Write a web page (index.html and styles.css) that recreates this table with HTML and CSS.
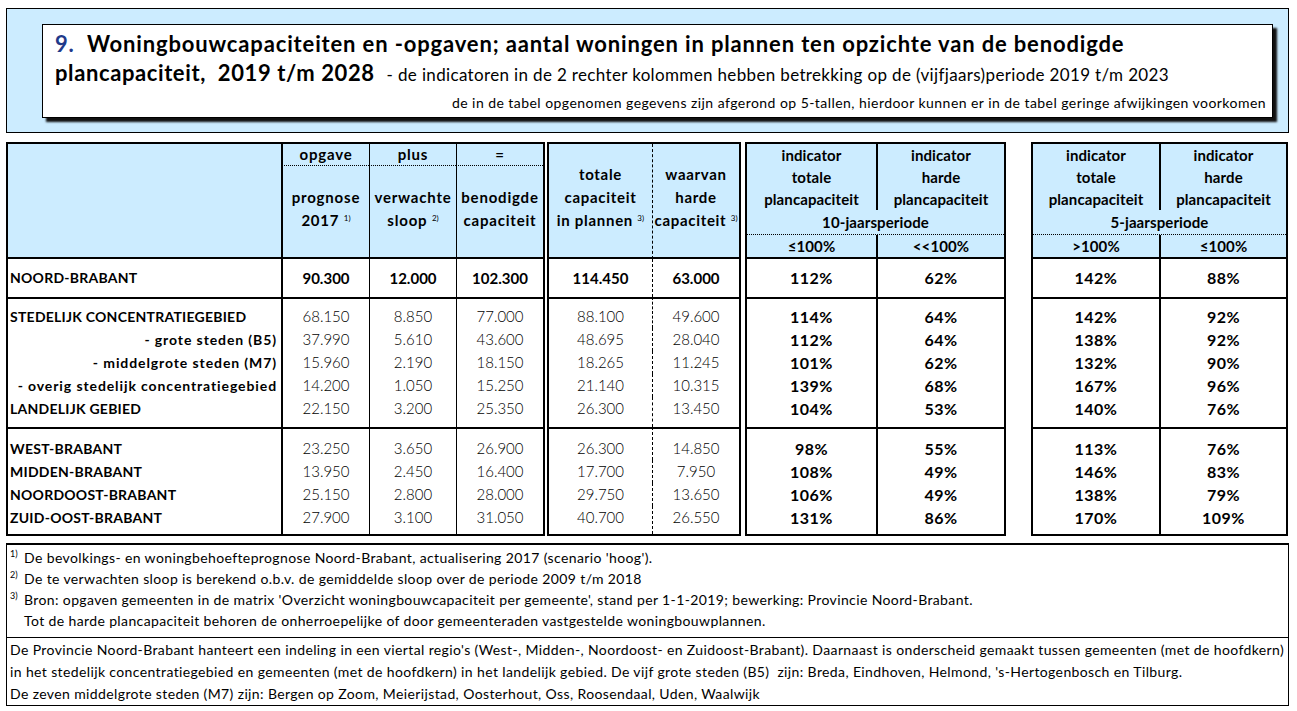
FILE: index.html
```html
<!DOCTYPE html>
<html lang="nl">
<head>
<meta charset="utf-8">
<title>Woningbouwcapaciteiten en -opgaven</title>
<link rel="stylesheet" href="styles.css">
</head>
<body>
<header class="titlebar">
  <div class="titlecard">
    <h1 class="t1"><span class="num">9.</span>&nbsp; Woningbouwcapaciteiten en -opgaven; aantal woningen in plannen ten opzichte van de benodigde</h1>
    <p class="t2"><b>plancapaciteit,&nbsp; 2019 t/m 2028</b><span class="sub">- de indicatoren in de 2 rechter kolommen hebben betrekking op de (vijfjaars)periode 2019 t/m 2023</span></p>
    <p class="t3">de in de tabel opgenomen gegevens zijn afgerond op 5-tallen, hierdoor kunnen er in de tabel geringe afwijkingen voorkomen</p>
  </div>
</header>

<main class="tables">
  <table class="blk blk-a">
    <colgroup><col class="wa1"><col class="wa2"><col class="wa3"><col class="wa4"></colgroup>
    <thead>
      <tr class="ha1"><th rowspan="2" class="corner"></th><th class="dot sp">opgave</th><th class="dot sp">plus</th><th class="dot sp">=</th></tr>
      <tr class="ha2"><th class="sp">prognose<br>2017 <sup>1)</sup></th><th class="sp">verwachte<br>sloop <sup>2)</sup></th><th class="sp">benodigde<br>capaciteit</th></tr>
    </thead>
    <tbody class="g1">
      <tr><th class="lab">NOORD-BRABANT</th><td class="b">90.300</td><td class="b">12.000</td><td class="b">102.300</td></tr>
    </tbody>
    <tbody class="g2">
      <tr><th class="lab">STEDELIJK CONCENTRATIEGEBIED</th><td>68.150</td><td>8.850</td><td>77.000</td></tr>
      <tr><th class="sublab">- grote steden (B5)</th><td>37.990</td><td>5.610</td><td>43.600</td></tr>
      <tr><th class="sublab">- middelgrote steden (M7)</th><td>15.960</td><td>2.190</td><td>18.150</td></tr>
      <tr><th class="sublab">- overig stedelijk concentratiegebied</th><td>14.200</td><td>1.050</td><td>15.250</td></tr>
      <tr><th class="lab">LANDELIJK GEBIED</th><td>22.150</td><td>3.200</td><td>25.350</td></tr>
    </tbody>
    <tbody class="g3">
      <tr><th class="lab">WEST-BRABANT</th><td>23.250</td><td>3.650</td><td>26.900</td></tr>
      <tr><th class="lab">MIDDEN-BRABANT</th><td>13.950</td><td>2.450</td><td>16.400</td></tr>
      <tr><th class="lab">NOORDOOST-BRABANT</th><td>25.150</td><td>2.800</td><td>28.000</td></tr>
      <tr><th class="lab">ZUID-OOST-BRABANT</th><td>27.900</td><td>3.100</td><td>31.050</td></tr>
    </tbody>
  </table>

  <table class="blk blk-b">
    <colgroup><col class="wb1"><col class="wb2"></colgroup>
    <thead>
      <tr class="hb"><th>totale<br>capaciteit<br>in plannen <sup>3)</sup></th><th>waarvan<br>harde<br>capaciteit <sup>3)</sup></th></tr>
    </thead>
    <tbody class="g1"><tr><td class="b">114.450</td><td class="b">63.000</td></tr></tbody>
    <tbody class="g2">
      <tr><td>88.100</td><td>49.600</td></tr>
      <tr><td>48.695</td><td>28.040</td></tr>
      <tr><td>18.265</td><td>11.245</td></tr>
      <tr><td>21.140</td><td>10.315</td></tr>
      <tr><td>26.300</td><td>13.450</td></tr>
    </tbody>
    <tbody class="g3">
      <tr><td>26.300</td><td>14.850</td></tr>
      <tr><td>17.700</td><td>7.950</td></tr>
      <tr><td>29.750</td><td>13.650</td></tr>
      <tr><td>40.700</td><td>26.550</td></tr>
    </tbody>
  </table>

  <table class="blk blk-c pct">
    <colgroup><col class="wc1"><col class="wc2"></colgroup>
    <thead>
      <tr class="hc1"><th>indicator<br>totale<br>plancapaciteit</th><th>indicator<br>harde<br>plancapaciteit</th></tr>
      <tr class="hc2"><th colspan="2">10-jaarsperiode</th></tr>
      <tr class="hc3"><th>≤100%</th><th>&lt;&lt;100%</th></tr>
    </thead>
    <tbody class="g1"><tr><td>112%</td><td>62%</td></tr></tbody>
    <tbody class="g2">
      <tr><td>114%</td><td>64%</td></tr>
      <tr><td>112%</td><td>64%</td></tr>
      <tr><td>101%</td><td>62%</td></tr>
      <tr><td>139%</td><td>68%</td></tr>
      <tr><td>104%</td><td>53%</td></tr>
    </tbody>
    <tbody class="g3">
      <tr><td>98%</td><td>55%</td></tr>
      <tr><td>108%</td><td>49%</td></tr>
      <tr><td>106%</td><td>49%</td></tr>
      <tr><td>131%</td><td>86%</td></tr>
    </tbody>
  </table>

  <table class="blk blk-d pct">
    <colgroup><col class="wd1"><col class="wd2"></colgroup>
    <thead>
      <tr class="hc1"><th>indicator<br>totale<br>plancapaciteit</th><th>indicator<br>harde<br>plancapaciteit</th></tr>
      <tr class="hc2"><th colspan="2">5-jaarsperiode</th></tr>
      <tr class="hc3"><th>&gt;100%</th><th>≤100%</th></tr>
    </thead>
    <tbody class="g1"><tr><td>142%</td><td>88%</td></tr></tbody>
    <tbody class="g2">
      <tr><td>142%</td><td>92%</td></tr>
      <tr><td>138%</td><td>92%</td></tr>
      <tr><td>132%</td><td>90%</td></tr>
      <tr><td>167%</td><td>96%</td></tr>
      <tr><td>140%</td><td>76%</td></tr>
    </tbody>
    <tbody class="g3">
      <tr><td>113%</td><td>76%</td></tr>
      <tr><td>146%</td><td>83%</td></tr>
      <tr><td>138%</td><td>79%</td></tr>
      <tr><td>170%</td><td>109%</td></tr>
    </tbody>
  </table>
</main>

<footer class="notes">
  <div class="fn">
    <p class="fn-line"><sup class="mk">1)</sup><span>De bevolkings- en woningbehoefteprognose Noord-Brabant, actualisering 2017 (scenario 'hoog').</span></p>
    <p class="fn-line"><sup class="mk">2)</sup><span>De te verwachten sloop is berekend o.b.v. de gemiddelde sloop over de periode 2009 t/m 2018</span></p>
    <p class="fn-line"><sup class="mk">3)</sup><span>Bron: opgaven gemeenten in de matrix 'Overzicht woningbouwcapaciteit per gemeente', stand per 1-1-2019; bewerking: Provincie Noord-Brabant.</span></p>
    <p class="fn-line"><span class="mk"></span><span>Tot de harde plancapaciteit behoren de onherroepelijke of door gemeenteraden vastgestelde woningbouwplannen.</span></p>
  </div>
  <div class="explain">
    <p>De Provincie Noord-Brabant hanteert een indeling in een viertal regio's (West-, Midden-, Noordoost- en Zuidoost-Brabant). Daarnaast is onderscheid gemaakt tussen gemeenten (met de hoofdkern)</p>
    <p>in het stedelijk concentratiegebied en gemeenten (met de hoofdkern) in het landelijk gebied. De vijf grote steden (B5)&nbsp; zijn: Breda, Eindhoven, Helmond, 's-Hertogenbosch en Tilburg.</p>
    <p>De zeven middelgrote steden (M7) zijn: Bergen op Zoom, Meierijstad, Oosterhout, Oss, Roosendaal, Uden, Waalwijk</p>
  </div>
</footer>
</body>
</html>
```

FILE: styles.css
```css
* { box-sizing: border-box; }
html, body { margin: 0; padding: 0; background: #fff; }
body {
  font-family: "Lato", "Liberation Sans", sans-serif;
  color: #000;
  width: 1297px;
  padding: 8px 8px 0 6px;
}

/* ---------- title ---------- */
.titlebar {
  width: 1283px;
  height: 125px;
  background: #ccecff;
  border: 1px solid #000;
  padding: 15px 15px 0 35px;
}
.titlecard {
  height: 94px;
  background: #fff;
  border: 1px solid #000;
  box-shadow: 4px 4px 2px #111;
  padding: 5px 6px 0 12px;
}
.t1 {
  margin: 0;
  font-size: 22px;
  font-weight: 700;
  line-height: 28px;
  white-space: nowrap;
  letter-spacing: 0.85px;
}
.num { color: #1f3a8a; }
.t2 {
  margin: 0;
  font-size: 22px;
  line-height: 29px;
  white-space: nowrap;
}
.t2 b { font-weight: 700; letter-spacing: 0.6px; }
.sub { font-size: 17px; font-weight: 400; margin-left: 12px; letter-spacing: 0.35px; }
.t3 {
  margin: 0;
  font-size: 14px;
  line-height: 28px;
  text-align: right;
  white-space: nowrap;
  letter-spacing: 0.45px;
}

/* ---------- tables ---------- */
.tables {
  display: flex;
  align-items: flex-start;
  margin-top: 9px;
  width: 1283px;
}
.blk {
  border-collapse: separate;
  border-spacing: 0;
  table-layout: fixed;
  border: 2px solid #000;
  flex: none;
}
.blk-a { width: 539px; }
.blk-b { width: 194px; margin-left: 2px; }
.blk-c { width: 261px; margin-left: 4px; }
.blk-d { width: 257px; margin-left: 25px; }

.wa1 { width: 273px; } .wa2 { width: 88px; } .wa3 { width: 87px; } .wa4 { width: 87px; }
.wb1 { width: 103px; } .wb2 { width: 87px; }
.wc1 { width: 129px; } .wc2 { width: 128px; }
.wd1 { width: 126px; } .wd2 { width: 127px; }

.blk th, .blk td {
  padding: 0;
  text-align: center;
  white-space: nowrap;
}
.blk thead th {
  background: #ccecff;
  font-size: 15px;
  font-weight: 700;
  letter-spacing: 0.1px;
  vertical-align: top;
}
sup { font-size: 8px; font-weight: 400; vertical-align: 5px; line-height: 0; letter-spacing: 0; }

/* block A */
.blk-a .ha1 > :nth-child(2), .blk-a .ha2 > :first-child, .blk-a tbody tr > :nth-child(2) { border-left: 2px solid #000; }
.blk-a .ha1 > :nth-child(n+3), .blk-a .ha2 > :nth-child(n+2), .blk-a tbody tr > :nth-child(n+3) { border-left: 1px solid #000; }
.blk-a .corner { border-bottom: 2px solid #000; }
.blk-a .ha1 th { line-height: 21px; }
.blk-a .ha1 th.dot { border-bottom: 1px dotted #000; }
.blk-a .ha2 th { line-height: 23px; padding: 20px 0 25px; border-bottom: 2px solid #000; }
.blk-a thead th.sp { letter-spacing: 0.8px; }

/* block B */
.blk-b td + td, .blk-b th + th { border-left: 1px dashed #000; }
.blk-b .hb th { line-height: 23px; padding: 19px 0 25px; border-bottom: 2px solid #000; letter-spacing: 0.7px; }

/* blocks C & D */
.pct th + th, .pct td + td { border-left: 2px solid #000; }
.hc1 th { line-height: 22px; }
.hc2 th { line-height: 24px; border-bottom: 1px dotted #000; }
.hc3 th { line-height: 22px; border-bottom: 2px solid #000; }

/* body rows */
.blk tbody td, .blk tbody th {
  font-size: 15px;
  line-height: 23px;
  font-weight: 300;
  vertical-align: middle;
}
.blk tbody.g1 > tr > * { line-height: 38px; }
.blk tbody.g2 > tr:first-child > * { border-top: 2px solid #000; padding-top: 6px; }
.blk tbody.g2 > tr:last-child > * { padding-bottom: 7px; }
.blk tbody.g3 > tr:first-child > * { border-top: 2px solid #000; padding-top: 8px; }
.blk tbody.g3 > tr:last-child > * { padding-bottom: 5px; }
.blk tbody .b { font-weight: 700; }
.pct tbody td { font-weight: 700; font-size: 16px; letter-spacing: 0.5px; }

.blk tbody th.lab {
  text-align: left;
  padding-left: 2px;
  font-size: 14px;
  font-weight: 700;
  letter-spacing: 0.25px;
}
.blk tbody th.sublab {
  text-align: right;
  padding-right: 4px;
  font-size: 14px;
  font-weight: 700;
  letter-spacing: 0.9px;
}

/* ---------- notes ---------- */
.notes {
  width: 1283px;
  margin-top: 7px;
  border: 1px solid #000;
  border-top: 2px solid #000;
  font-size: 14px;
  font-weight: 400;
  letter-spacing: 0.38px;
}
.fn { padding: 2px 0 6px 3px; border-bottom: 1px solid #000; }
.fn-line { margin: 0; line-height: 21px; display: flex; white-space: nowrap; }
.fn-line .mk { width: 14px; flex: none; font-size: 9px; line-height: 14px; letter-spacing: 0; }
.explain { padding: 1px 0 0 3px; }
.explain p { margin: 0; line-height: 22px; white-space: nowrap; }
```
